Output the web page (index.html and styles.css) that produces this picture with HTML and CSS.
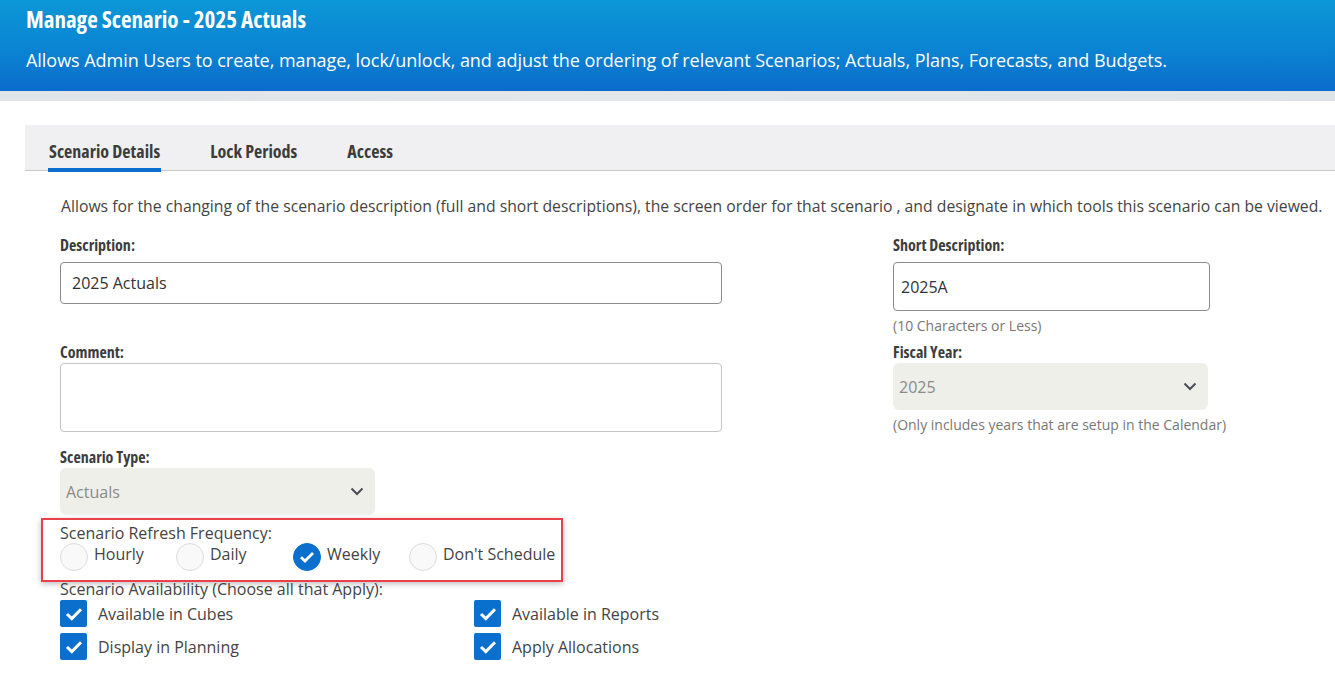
FILE: index.html
```html
<!DOCTYPE html>
<html>
<head>
<meta charset="utf-8">
<link rel="stylesheet" href="styles.css">
</head>
<body>
<header class="hero">
  <h1 class="hero-title">Manage Scenario - 2025 Actuals</h1>
  <p class="hero-sub">Allows Admin Users to create, manage, lock/unlock, and adjust the ordering of relevant Scenarios; Actuals, Plans, Forecasts, and Budgets.</p>
</header>
<div class="band"></div>
<main class="panel">
  <nav class="tabs">
    <span class="tab active">Scenario Details</span>
    <span class="tab">Lock Periods</span>
    <span class="tab">Access</span>
  </nav>
  <p class="intro">Allows for the changing of the scenario description (full and short descriptions), the screen order for that scenario , and designate in which tools this scenario can be viewed.</p>
  <div class="grid">
    <div class="col-left">
      <label class="lbl">Description:</label>
      <div class="input desc">2025 Actuals</div>
      <label class="lbl lbl-comment">Comment:</label>
      <div class="input textarea"></div>
      <label class="lbl lbl-type">Scenario Type:</label>
      <div class="select type-select"><span>Actuals</span>
        <svg class="chev" width="14" height="9" viewBox="0 0 14 9"><path d="M1.5 1.5 L7 7 L12.5 1.5" fill="none" stroke="#4a4f57" stroke-width="2"/></svg>
      </div>
    </div>
    <div class="col-right">
      <label class="lbl">Short Description:</label>
      <div class="input short">2025A</div>
      <div class="hint">(10 Characters or Less)</div>
      <label class="lbl lbl-fy">Fiscal Year:</label>
      <div class="select fy-select"><span>2025</span>
        <svg class="chev" width="14" height="9" viewBox="0 0 14 9"><path d="M1.5 1.5 L7 7 L12.5 1.5" fill="none" stroke="#4a4f57" stroke-width="2"/></svg>
      </div>
      <div class="hint">(Only includes years that are setup in the Calendar)</div>
    </div>
  </div>
  <section class="freq-box">
    <div class="plain">Scenario Refresh Frequency:</div>
    <div class="radios">
      <span class="radio"><span class="circle"></span><span class="rtext">Hourly</span></span>
      <span class="radio"><span class="circle"></span><span class="rtext">Daily</span></span>
      <span class="radio"><span class="circle on"><svg width="16" height="12" viewBox="0 0 16 12"><path d="M2 6.2 L6 10 L14 2" fill="none" stroke="#fff" stroke-width="2.8"/></svg></span><span class="rtext">Weekly</span></span>
      <span class="radio"><span class="circle"></span><span class="rtext">Don't Schedule</span></span>
    </div>
  </section>
  <div class="plain avail">Scenario Availability (Choose all that Apply):</div>
  <div class="checks">
    <span class="check"><span class="box"><svg width="18" height="14" viewBox="0 0 18 14"><path d="M2 7 L6.8 11.6 L16 2.2" fill="none" stroke="#fff" stroke-width="3"/></svg></span>Available in Cubes</span>
    <span class="check"><span class="box"><svg width="18" height="14" viewBox="0 0 18 14"><path d="M2 7 L6.8 11.6 L16 2.2" fill="none" stroke="#fff" stroke-width="3"/></svg></span>Available in Reports</span>
    <span class="check"><span class="box"><svg width="18" height="14" viewBox="0 0 18 14"><path d="M2 7 L6.8 11.6 L16 2.2" fill="none" stroke="#fff" stroke-width="3"/></svg></span>Display in Planning</span>
    <span class="check"><span class="box"><svg width="18" height="14" viewBox="0 0 18 14"><path d="M2 7 L6.8 11.6 L16 2.2" fill="none" stroke="#fff" stroke-width="3"/></svg></span>Apply Allocations</span>
  </div>
</main>
</body>
</html>
```
FILE: styles.css
```css
* { box-sizing: border-box; }
html, body { margin: 0; padding: 0; }
body {
  font-family: "Open Sans", "Liberation Sans", sans-serif;
  color: #444;
  background: #fff;
  width: 1335px;
  height: 679px;
  overflow: hidden;
}
.hero {
  height: 91px;
  background: linear-gradient(180deg, #0b97d7 0%, #0a84d2 55%, #0b6bcb 100%);
  color: #fff;
  padding: 4px 26px 0;
}
.hero-title {
  margin: 0;
  font-size: 23px;
  font-weight: 700;
  font-stretch: 75%;
  line-height: 30px;
}
.hero-sub {
  margin: 14px 0 0;
  font-size: 18px;
  line-height: 24px;
  letter-spacing: -0.04px;
}
.band {
  height: 10px;
  background: linear-gradient(90deg, #dfe4e9, #e3e7ea 50%, #dde3e8);
}
.panel {
  margin: 24px 0 0 25px;
}
.tabs {
  height: 46px;
  background: #f0f0f3;
  border-bottom: 1px solid #c8c8c8;
  display: flex;
  padding: 6px 0 0 23px;
}
.tab {
  font-size: 18px;
  font-weight: 700;
  font-stretch: 75%;
  color: #3c3c3c;
  line-height: 40px;
  height: 40px;
  padding: 0 1px;
  margin-right: 48px;
  position: relative;
}
.tab.active::after {
  content: "";
  position: absolute;
  left: 0;
  right: 0;
  bottom: -1px;
  height: 4px;
  background: #0b6fce;
}
.intro {
  margin: 24px 0 0 36px;
  font-size: 15.75px;
  line-height: 22px;
  color: #444;
  white-space: nowrap;
}
.grid {
  display: flex;
  margin: 18px 0 0 35px;
}
.col-left { width: 833px; display: flex; flex-direction: column; align-items: flex-start; }
.col-right { display: flex; flex-direction: column; align-items: flex-start; }
.lbl {
  font-size: 16px;
  font-weight: 700;
  font-stretch: 75%;
  color: #3c3c3c;
  line-height: 20px;
  display: block;
}
.input {
  border: 1px solid #8c8c8c;
  border-radius: 4px;
  background: #fff;
  font-size: 16px;
  color: #333;
  display: flex;
  align-items: center;
}
.desc { width: 662px; height: 42px; margin-top: 7px; padding-left: 11px; }
.lbl-comment { margin-top: 38px; }
.textarea { width: 662px; height: 69px; margin-top: 1px; border-color: #c4c4c4; }
.lbl-type { margin-top: 15px; }
.select {
  background: #efefea;
  border-radius: 6px;
  display: flex;
  align-items: center;
  justify-content: space-between;
  color: #8a8a8a;
  font-size: 16px;
  padding: 0 11px 0 6px;
}
.type-select { width: 315px; height: 47px; margin-top: 1px; }
.short { width: 317px; height: 49px; margin-top: 7px; padding-left: 7px; }
.hint { font-size: 14px; color: #777; line-height: 18px; margin-top: 6px; }
.lbl-fy { margin-top: 7px; }
.fy-select { width: 315px; height: 47px; margin-top: 1px; }
.freq-box {
  margin: 3px 0 0 16px;
  width: 522px;
  height: 64px;
  border: 2px solid #ea4148;
  box-shadow: 0 2px 6px rgba(0,0,0,0.25);
  padding: 2px 0 0 17px;
}
.plain { font-size: 16px; line-height: 22px; color: #444; }
.radios { display: flex; margin-top: -1px; height: 28px; }
.radio {
  display: flex;
  align-items: flex-start;
  font-size: 16px;
  color: #444;
}
.rtext { line-height: 22px; }
.radio:nth-child(1) { width: 116px; }
.radio:nth-child(2) { width: 117px; }
.radio:nth-child(3) { width: 116px; }
.circle {
  width: 28px;
  height: 28px;
  border-radius: 50%;
  border: 1px solid #dcdcdc;
  background: #f9f9f9;
  margin-right: 6px;
  display: inline-flex;
  align-items: center;
  justify-content: center;
}
.circle.on { background: #0b6fce; border-color: #0b6fce; }
.avail { margin: -2px 0 0 35px; line-height: 18px; }
.checks {
  margin: 2px 0 0 35px;
  display: grid;
  grid-template-columns: 414px auto;
  row-gap: 6px;
}
.check {
  display: flex;
  align-items: center;
  font-size: 16px;
  color: #444;
  height: 27px;
}
.box {
  width: 27px;
  height: 27px;
  background: #0b6fce;
  border-radius: 2px;
  display: inline-flex;
  align-items: center;
  justify-content: center;
  margin-right: 11px;
}
```
